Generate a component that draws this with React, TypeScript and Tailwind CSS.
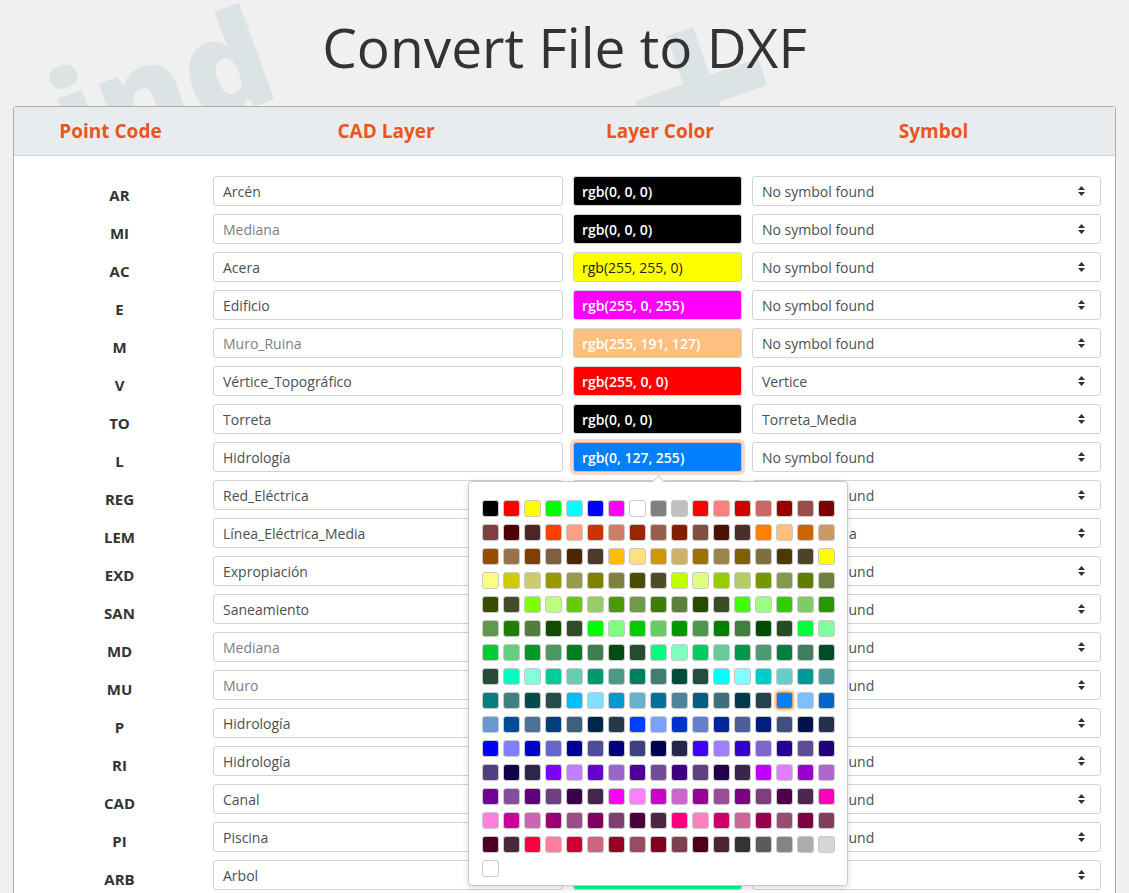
import React from 'react';

type Row = {
  code: string;
  layer: string;
  light?: boolean;
  color: [number, number, number];
  darkText?: boolean;
  symbol: string;
  focused?: boolean;
};

const rows: Row[] = [
  { code: 'AR', layer: 'Arcén', color: [0, 0, 0], symbol: 'No symbol found' },
  { code: 'MI', layer: 'Mediana', light: true, color: [0, 0, 0], symbol: 'No symbol found' },
  { code: 'AC', layer: 'Acera', color: [255, 255, 0], darkText: true, symbol: 'No symbol found' },
  { code: 'E', layer: 'Edificio', color: [255, 0, 255], symbol: 'No symbol found' },
  { code: 'M', layer: 'Muro_Ruina', light: true, color: [255, 191, 127], symbol: 'No symbol found' },
  { code: 'V', layer: 'Vértice_Topográfico', color: [255, 0, 0], symbol: 'Vertice' },
  { code: 'TO', layer: 'Torreta', color: [0, 0, 0], symbol: 'Torreta_Media' },
  { code: 'L', layer: 'Hidrología', color: [0, 127, 255], symbol: 'No symbol found', focused: true },
  { code: 'REG', layer: 'Red_Eléctrica', color: [0, 0, 165], symbol: 'No symbol found' },
  { code: 'LEM', layer: 'Línea_Eléctrica_Media', color: [0, 0, 0], symbol: 'Torreta_Media' },
  { code: 'EXD', layer: 'Expropiación', color: [255, 0, 0], symbol: 'No symbol found' },
  { code: 'SAN', layer: 'Saneamiento', color: [127, 63, 0], symbol: 'No symbol found' },
  { code: 'MD', layer: 'Mediana', light: true, color: [0, 0, 0], symbol: 'No symbol found' },
  { code: 'MU', layer: 'Muro', light: true, color: [255, 191, 127], symbol: 'No symbol found' },
  { code: 'P', layer: 'Hidrología', color: [0, 127, 255], symbol: 'Pozo' },
  { code: 'RI', layer: 'Hidrología', color: [0, 127, 255], symbol: 'No symbol found' },
  { code: 'CAD', layer: 'Canal', color: [0, 127, 255], symbol: 'No symbol found' },
  { code: 'PI', layer: 'Piscina', color: [0, 255, 255], symbol: 'No symbol found' },
  { code: 'ARB', layer: 'Arbol', color: [0, 255, 127], symbol: 'Arbol' },
];

// AutoCAD colour index -> rgb
const hsv = (h: number, s: number, v: number): [number, number, number] => {
  const i = Math.floor(h / 60) % 6;
  const f = h / 60 - Math.floor(h / 60);
  const p = Math.floor(v * (1 - s));
  const q = Math.floor(v * (1 - s * f));
  const t = Math.floor(v * (1 - s * (1 - f)));
  switch (i) {
    case 0: return [v, t, p];
    case 1: return [q, v, p];
    case 2: return [p, v, t];
    case 3: return [p, q, v];
    case 4: return [t, p, v];
    default: return [v, p, q];
  }
};

const base: Record<number, [number, number, number]> = {
  1: [255, 0, 0], 2: [255, 255, 0], 3: [0, 255, 0], 4: [0, 255, 255], 5: [0, 0, 255],
  6: [255, 0, 255], 7: [255, 255, 255], 8: [128, 128, 128], 9: [192, 192, 192],
};

const aci = (i: number): [number, number, number] => {
  if (i === 0) return [0, 0, 0];
  if (i < 10) return base[i];
  if (i >= 250) {
    const g = Math.min(255, Math.floor(51 + 40.8 * (i - 250)));
    return [g, g, g];
  }
  const n = i - 10;
  const hue = Math.floor(n / 10) * 15;
  const k = n % 10;
  const v = [255, 204, 153, 127, 76][Math.floor(k / 2)];
  return hsv(hue, k % 2 ? 0.5 : 1, v);
};

const palette = Array.from({ length: 256 }, (_, i) => aci(i));

const rgb = (c: [number, number, number]) => `rgb(${c[0]}, ${c[1]}, ${c[2]})`;

const Carets = () => (
  <svg width="7" height="10" viewBox="0 0 7 10" className="flex-shrink-0">
    <path d="M0 4 L3.5 0 L7 4 Z" fill="#333" />
    <path d="M0 6 L7 6 L3.5 10 Z" fill="#333" />
  </svg>
);

const ColorPicker = () => (
  <div className="absolute left-[-105px] top-[39px] z-20 w-[380px] h-[405px] bg-white border border-[#c8c8c8] rounded-[4px] shadow-[0_2px_6px_rgba(0,0,0,0.15)] pl-[13px] pt-[18px]">
    <div className="absolute left-[185px] top-[-5px] w-[9px] h-[9px] bg-white border-l border-t border-[#c8c8c8] rotate-45" />
    <div className="grid grid-cols-[repeat(17,17px)] gap-x-[4px] gap-y-[7px]">
      {palette.map((c, i) => (
        <div
          key={i}
          className={
            i === 150
              ? 'w-[17px] h-[17px] rounded-[3px] border border-[#e0a060] shadow-[0_0_3px_1px_rgba(255,150,40,0.8)]'
              : 'w-[17px] h-[17px] rounded-[3px] border border-[#c9c9c9]'
          }
          style={{ backgroundColor: rgb(c) }}
        />
      ))}
    </div>
  </div>
);

export default function App() {
  return (
    <div className="relative min-h-screen overflow-hidden bg-[#f0f0f0] font-['Open_Sans',sans-serif]">
      {/* watermark, only the strip above the card shows */}
      <div className="absolute left-0 top-0 w-full h-[107px] overflow-hidden z-0 pointer-events-none select-none" aria-hidden="true">
        <div className="absolute left-[80px] top-[52px] -rotate-[20deg] origin-bottom-left text-[135px] leading-none font-extrabold text-[#dbe3e5]">
          ind
        </div>
        <div className="absolute left-[636px] top-[28px] w-[130px] h-[130px] -rotate-[19deg]">
          <div className="absolute left-0 top-[51px] w-[130px] h-[28px] bg-[#dbe3e5]" />
          <div className="absolute left-[51px] top-0 w-[28px] h-[130px] bg-[#dbe3e5]" />
        </div>
      </div>

      <div className="relative z-10">
        <h1 className="h-[106px] pt-[16px] text-center text-[55px] leading-[62px] font-normal text-[#333333]">
          Convert File to DXF
        </h1>

        <div className="mx-[13px] border border-[#b2aca4] rounded-t-[3px] bg-white pb-[40px]">
          <div className="h-[49px] bg-[#e9ecef] border-b border-[#d2d6d9] grid grid-cols-[167px_350px_169px_349px] gap-x-[10px] pl-[22px] pr-[20px] items-center text-[19px] font-bold text-[#e8561f]">
            <div className="text-center pr-[18px]">Point Code</div>
            <div className="text-center pr-[4px]">CAD Layer</div>
            <div className="text-center pl-[5px]">Layer Color</div>
            <div className="text-center pl-[14px]">Symbol</div>
          </div>

          <div className="pt-[20px] pl-[22px] pr-[20px] grid grid-cols-[167px_350px_169px_349px] gap-x-[10px] gap-y-[8px]">
            {rows.map((r, idx) => (
              <React.Fragment key={idx}>
                <div className="h-[30px] flex items-center justify-center pt-[9px] text-[15px] font-bold text-[#333]">
                  {r.code}
                </div>
                <div className="h-[30px] flex items-center pl-[9px] border border-[#ced4da] rounded-[3px] bg-[#fffffe] text-[14px]">
                  <span className={r.light ? 'text-[#7a7f84]' : 'text-[#4a4f54]'}>{r.layer}</span>
                </div>
                <div className="relative">
                  <div
                    className={
                      r.focused
                        ? 'h-[30px] flex items-center pl-[8px] rounded-[3px] border border-[#f4b49e] ring-[3px] ring-[#fbd6c9] text-[14px] font-semibold text-white'
                        : r.darkText
                          ? 'h-[30px] flex items-center pl-[8px] rounded-[3px] border border-[#ced4da] text-[14px] text-[#222]'
                          : 'h-[30px] flex items-center pl-[8px] rounded-[3px] border border-[#ced4da] text-[14px] font-semibold text-white'
                    }
                    style={{ backgroundColor: rgb(r.color) }}
                  >
                    {rgb(r.color)}
                  </div>
                  {r.focused && <ColorPicker />}
                </div>
                <div className="h-[30px] flex items-center justify-between pl-[9px] pr-[15px] border border-[#ced4da] rounded-[3px] bg-[#fffffe] text-[14px] text-[#4a4f54]">
                  <span>{r.symbol}</span>
                  <Carets />
                </div>
              </React.Fragment>
            ))}
          </div>
        </div>
      </div>
    </div>
  );
}
